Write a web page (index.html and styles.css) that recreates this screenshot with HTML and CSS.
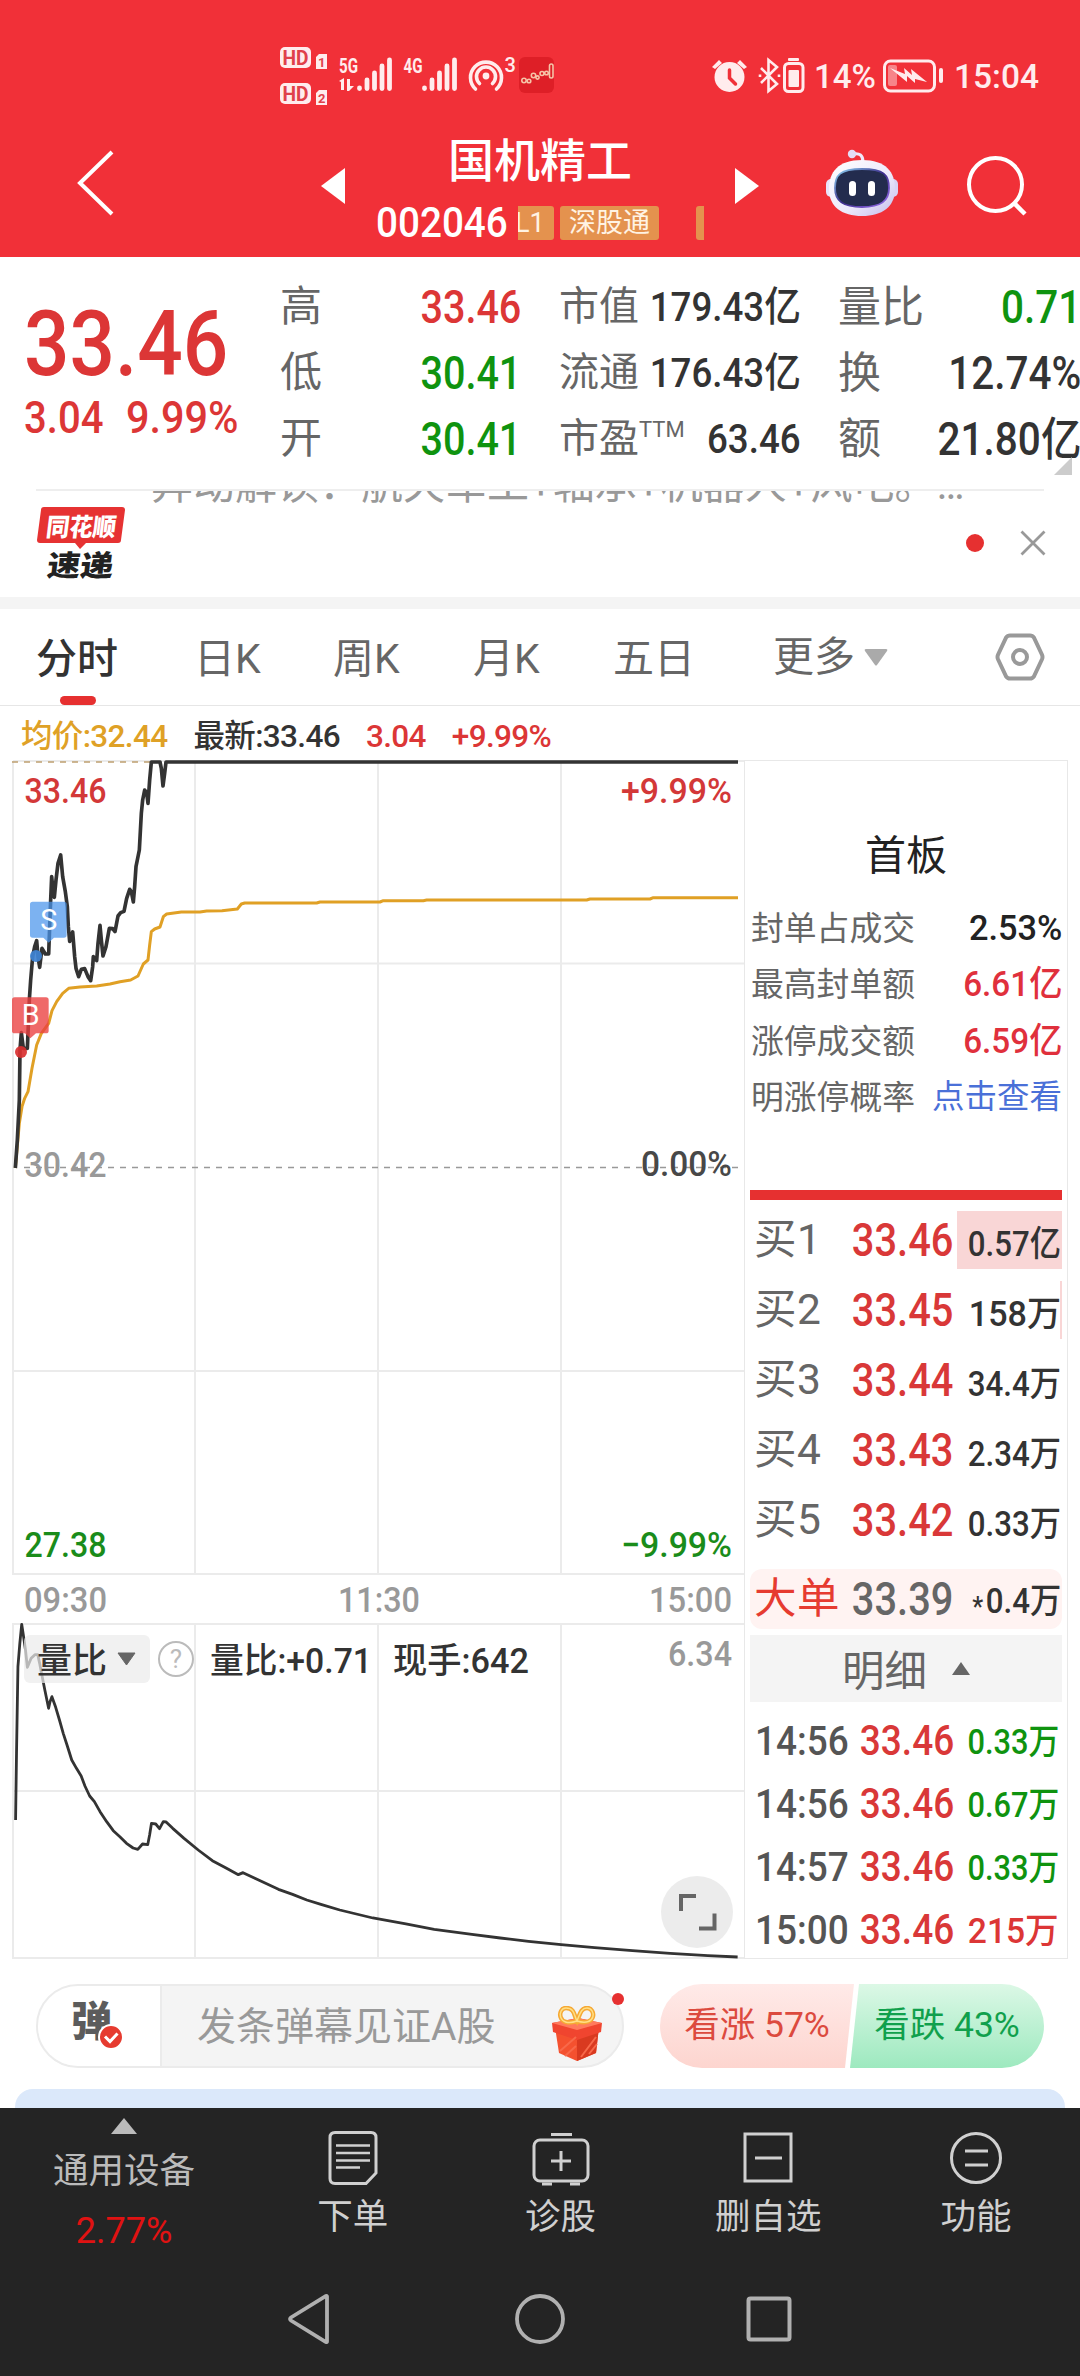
FILE: index.html
```html
<!DOCTYPE html>
<html lang="zh-CN">
<head>
<meta charset="utf-8">
<title>国机精工 002046</title>
<link rel="stylesheet" href="styles.css">
</head>
<body>
<header class="top">
  <div class="status">
    <svg class="status-left" width="290" height="70" viewBox="270 40 290 70">
      <g fill="#ffeced">
        <rect x="280" y="47" width="31" height="21" rx="5"/><rect x="280" y="83" width="31" height="21" rx="5"/>
        <path d="M316 57l3-3h8v15h-11zM316 93l3-3h8v15h-11z"/>
      </g>
      <g class="hd">
        <text x="282.500" y="64.500" textLength="26" lengthAdjust="spacingAndGlyphs">HD</text>
        <text x="282.500" y="100.500" textLength="26" lengthAdjust="spacingAndGlyphs">HD</text>
        <text class="sim" x="318" y="67">1</text><text class="sim" x="318" y="103">2</text>
      </g>
      <g class="net">
        <text x="339" y="73" textLength="19" lengthAdjust="spacingAndGlyphs">5G</text>
        <text x="403.500" y="73" textLength="19" lengthAdjust="spacingAndGlyphs">4G</text>
        <text class="count" x="504.500" y="72">3</text>
      </g>
      <g stroke="#ffeced" stroke-width="4.800" stroke-linecap="round" fill="none">
        <path d="M359.500 88v.5M367 80v8.500M374.500 73v15.500M382 66v22.500M389.500 60v28.500"/>
        <path d="M424.500 88v.5M432 80v8.500M439.500 73v15.500M447 66v22.500M454.500 60v28.500"/>
        <g stroke-width="3.600"><path d="M475.500 89a15.500 15.500 0 1 1 21 0M479.500 83.500a9.500 9.500 0 1 1 13 0"/></g>
      </g>
      <circle cx="486" cy="76" r="3.400" fill="#ffeced"/>
      <path d="M339 81l5-3v12h-3v-8zM347 79h3v7h4l-5 5h-2z" fill="#ffeced"/>
      <rect x="519" y="57" width="35" height="36" rx="6" fill="#de1f27"/>
      <g fill="none" stroke="#f6c4a8" stroke-width="1.600">
        <circle cx="524" cy="80.500" r="2.200"/><circle cx="529" cy="81" r="1.800"/><circle cx="533.500" cy="75.500" r="2.200"/><circle cx="537.500" cy="77.500" r="1.600"/><circle cx="542" cy="73.500" r="2"/><circle cx="546.500" cy="73" r="1.800"/>
        <rect x="549.500" y="64" width="3.500" height="14" rx="1.700"/>
      </g>
    </svg>
    <svg class="status-right" width="340" height="70" viewBox="705 40 340 70">
      <g fill="#ffeced">
        <circle cx="729.500" cy="77" r="15"/><path d="M712 67l7-7 3 3-7 6zM747 67l-7-7-3 3 7 6z"/>
        <rect x="788" y="58" width="11" height="3" rx="1"/><rect x="788.500" y="70" width="10.500" height="17" rx="1"/>
        <rect x="939" y="68" width="4" height="15" rx="2"/>
        <rect x="888" y="65" width="9" height="21" rx="2" opacity=".45"/>
        <path d="M890 68l15 6-1-6 8 7-1-6 16 13-12-3v4l-8-7v6z"/>
      </g>
      <path d="M729.500 70v8l6 6" fill="none" stroke="#f03038" stroke-width="3.500" stroke-linecap="round"/>
      <g fill="none" stroke="#ffeced">
        <path stroke-width="2.600" d="M761 68l16 16-8.500 7V60l8.500 7-16 16M760 74.500v2.500M779 74.500v2.500"/>
        <rect stroke-width="3" x="784.500" y="63.500" width="18.500" height="28" rx="4"/>
        <rect stroke-width="3" x="884.500" y="61" width="50" height="30" rx="6"/>
      </g>
      <g class="clock">
        <text x="814" y="88" textLength="62" lengthAdjust="spacingAndGlyphs">14%</text>
        <text x="954" y="88" textLength="85" lengthAdjust="spacingAndGlyphs">15:04</text>
      </g>
    </svg>
  </div>
  <div class="titlebar">
    <svg class="back" width="40" height="68" viewBox="0 0 40 68"><path d="M37 3L5 34l32 31" fill="none" stroke="#fff" stroke-width="4"/></svg>
    <svg class="prev" width="24" height="36" viewBox="0 0 24 36"><path d="M24 0v36L0 18z" fill="#fff"/></svg>
    <div class="names">
      <h1>国机精工</h1>
      <div class="code-row">
        <span class="code">002046</span>
        <div class="tags"><span class="tag cut">L1</span><span class="tag">深股通</span><span class="tag stub"></span></div>
      </div>
    </div>
    <svg class="next" width="24" height="36" viewBox="0 0 24 36"><path d="M0 0v36l24-18z" fill="#fff"/></svg>
    <svg class="robot" width="76" height="72" viewBox="823 147 76 72">
      <defs>
        <linearGradient id="shell" x1="0" y1="0" x2="1" y2="1"><stop offset="0" stop-color="#fff"/><stop offset=".6" stop-color="#ece8fb"/><stop offset="1" stop-color="#c3bbec"/></linearGradient>
        <linearGradient id="rim" x1="0" y1="0" x2="1" y2="1"><stop offset="0" stop-color="#8fd8f5"/><stop offset=".5" stop-color="#3c2c8c"/><stop offset="1" stop-color="#9a6ff0"/></linearGradient>
      </defs>
      <path d="M852 154q10-2 10 8" fill="none" stroke="#efe8fa" stroke-width="3"/>
      <circle cx="851" cy="154" r="4.200" fill="#e4dcf5"/>
      <rect x="825" y="179" width="10" height="18" rx="5" fill="#e9e3fa"/><rect x="887" y="179" width="10" height="18" rx="5" fill="#d9d2f5"/>
      <path d="M861 160c24 0 33 12 33 29 0 18-13 27-33 27s-33-9-33-27c0-17 9-29 33-29z" fill="url(#shell)"/>
      <path d="M861 169c22 0 27 6 27 19s-8 19-27 19-27-6-27-19 5-19 27-19z" fill="#232c4e" stroke="url(#rim)" stroke-width="1.800"/>
      <rect x="848" y="181" width="7" height="15" rx="3.500" fill="#fff"/><rect x="867" y="181" width="7" height="15" rx="3.500" fill="#fff"/>
    </svg>
    <svg class="search" width="62" height="62" viewBox="964 154 62 62"><circle cx="994.500" cy="184.500" r="26.500" fill="none" stroke="#fff" stroke-width="4"/><path d="M1013 203l11 11" stroke="#fff" stroke-width="4.500"/></svg>
  </div>
</header>

<section class="quote">
  <div class="last red">
    <div class="price"><span class="sl">33.46</span></div>
    <div class="change"><span class="sl">3.04</span><span class="sl">9.99%</span></div>
  </div>
  <dl class="c1">
    <div><dt>高</dt><dd class="red"><span class="sr">33.46</span></dd></div>
    <div><dt>低</dt><dd class="green"><span class="sr">30.41</span></dd></div>
    <div><dt>开</dt><dd class="green"><span class="sr">30.41</span></dd></div>
  </dl>
  <dl class="c2">
    <div><dt>市值</dt><dd><span class="sr">179.43亿</span></dd></div>
    <div><dt>流通</dt><dd><span class="sr">176.43亿</span></dd></div>
    <div><dt>市盈<sup>TTM</sup></dt><dd><span class="sr">63.46</span></dd></div>
  </dl>
  <dl class="c3">
    <div><dt>量比</dt><dd class="green"><span class="sr">0.71</span></dd></div>
    <div><dt>换</dt><dd><span class="sr">12.74%</span></dd></div>
    <div><dt>额</dt><dd><span class="sr">21.80亿</span></dd></div>
  </dl>
  <i class="corner"></i>
</section>

<section class="express">
  <svg class="logo" width="92" height="78" viewBox="35 504 92 78">
    <path d="M44 507h78q3 0 3 3l-4 30q0 3-3 3H86l-6 6-5-6H40q-3 0-3-3l4-30q0-3 3-3z" fill="#e63232"/>
    <g transform="skewX(-7)">
      <text class="logo-a" x="111" y="536" textLength="70" lengthAdjust="spacingAndGlyphs">同花顺</text>
      <text class="logo-b" x="117" y="576" textLength="66" lengthAdjust="spacingAndGlyphs">速递</text>
    </g>
  </svg>
  <div class="ticker"><p>异动解读：航天军工+轴承+机器人+风电。…</p></div>
  <i class="dot"></i>
  <svg class="close" width="26" height="26" viewBox="0 0 26 26"><path d="M1.500 1.500l23 23M24.500 1.500l-23 23" stroke="#999" stroke-width="2.800"/></svg>
</section>

<nav class="tabs">
  <a class="on">分时</a><a>日K</a><a>周K</a><a>月K</a><a>五日</a><a class="more">更多<svg width="24" height="19" viewBox="0 0 24 19"><path d="M2 1h20q2 0 1 2L13 17q-1 1-2 0L1 3Q0 1 2 1z" fill="#aaa"/></svg></a>
  <svg class="gear" width="50" height="48" viewBox="0 0 50 48"><path d="M15 2.500h20q2.500 0 4 2.200l8 17q1 2.300 0 4.600l-8 17q-1.500 2.200-4 2.200H15q-2.500 0-4-2.200l-8-17q-1-2.300 0-4.600l8-17q1.500-2.200 4-2.200z" fill="none" stroke="#999" stroke-width="4"/><circle cx="25" cy="24" r="7" fill="none" stroke="#999" stroke-width="4"/></svg>
</nav>

<main class="market">
  <section class="chart-col">
    <div class="legend"><span class="avg">均价:32.44</span><span>最新:33.46</span><span class="red">3.04</span><span class="red">+9.99%</span></div>
    <svg class="chart" width="744" height="1202" viewBox="0 758 744 1202">
      <g class="grid">
        <path d="M13 761v813M195 761v813M378 761v813M561 761v813M13 963.500h731M13 1371h731M12 1574h732M13 761h731"/>
        <path d="M13 1624v334M195 1624v334M378 1624v334M561 1624v334M12 1624h732M13 1791h731M12 1958h732"/>
      </g>
      <path class="limit" d="M12 762h140"/>
      <path class="base" d="M24 1167.500h714"/>
      <g class="labels">
        <text class="t-red" x="24.500" y="803" textLength="82" lengthAdjust="spacingAndGlyphs">33.46</text>
        <text class="t-red" x="621" y="803" textLength="111" lengthAdjust="spacingAndGlyphs">+9.99%</text>
        <text class="t-gray" x="24.500" y="1177" textLength="82" lengthAdjust="spacingAndGlyphs">30.42</text>
        <text class="t-dark" x="641" y="1176" textLength="91" lengthAdjust="spacingAndGlyphs">0.00%</text>
        <text class="t-green" x="24.500" y="1557" textLength="82" lengthAdjust="spacingAndGlyphs">27.38</text>
        <text class="t-green" x="621" y="1557" textLength="111" lengthAdjust="spacingAndGlyphs">−9.99%</text>
        <text class="t-gray" x="24" y="1612" textLength="83" lengthAdjust="spacingAndGlyphs">09:30</text>
        <text class="t-gray" x="338" y="1612" textLength="82" lengthAdjust="spacingAndGlyphs">11:30</text>
        <text class="t-gray" x="649" y="1612" textLength="83" lengthAdjust="spacingAndGlyphs">15:00</text>
        <text class="t-gray" x="668" y="1666" textLength="64" lengthAdjust="spacingAndGlyphs">6.34</text>
      </g>
      <g transform="translate(0 740) scale(.33333)">
        <path class="avg-line" d="M46 1284L58 1150 66 1100 74 1075 84 1055 96 985 110 915 124 880 146 850 156 812 170 785 188 760 206 745 240 741 290 738 330 732 360 725 392 720 414 708 430 672 444 660 449 615 454 575 464 567 480 561 490 530 500 522 544 516H600L620 513 666 512 712 507 724 492 734 489H950L960 486H1140L1150 482H1270L1280 480H1760L1770 477H1950L1960 473H2214"/>
        <path class="price-line" d="M46 1284L52 1200 58 1080 60 930 64 878 70 925H82L84 880 88 780 92 720 98 650 104 620 110 602 114 650 119 682 126 625 136 642H146L149 560 152 480 155 410 158 440 163 472 168 420 174 370 182 345 188 410 196 455 202 500 205 560 209 604 218 576 224 650 228 685 236 710 244 688 254 686 264 710 272 722 278 680 280 650 290 662 294 610 300 556 304 600 309 648 318 620 328 565 338 566 345 575 354 528 362 518 372 514 380 475 389 448 394 455 400 486 404 440 408 380 418 330 424 220 428 180 434 150 440 158 444 190 449 120 454 66H480L484 85 489 138 494 100 498 66H2214"/>
        <path d="M98 485h94q8 0 8 8v92q0 8-8 8h-30l-16 15-16-15H98q-8 0-8-8v-92q0-8 8-8z" fill="#4a94ec" opacity=".72"/>
        <circle cx="108" cy="648" r="18" fill="#3f83d4" opacity=".92"/>
        <path d="M44 772h94q8 0 8 8v92q0 8-8 8h-30l-17 15-16-15H44q-8 0-8-8v-92q0-8 8-8z" fill="#ea3f3f" opacity=".78"/>
        <circle cx="63" cy="936" r="18" fill="#d93030" opacity=".92"/>
        <text class="mark" x="146" y="569">S</text><text class="mark" x="92" y="856">B</text>
      </g>
      <path class="vol-line" transform="translate(0 1500) scale(.47193 .33333)" d="M33 960L35 760 38 500 42 430 46 373 50 410 54 450 58 502 66 475 74 464H80L84 490 88 520 95 570 103 625 106 605 110 590 118 622 126 660 134 700 142 735 152 780 162 805 172 828 180 858 190 888 200 905 212 935 226 965 240 992 254 1010 268 1030 282 1044 292 1048 302 1032 313 1034 317 1005 321 970 330 972 338 986 346 965 352 966 366 985 390 1015 420 1050 450 1082 480 1105 505 1124 515 1118 540 1135 590 1168 620 1183 650 1200 680 1213 720 1230 790 1254 860 1272 920 1288 1000 1303 1060 1314 1120 1324 1189 1334 1260 1343 1340 1352 1420 1360 1500 1367 1563 1371"/>
      <rect x="24" y="1635" width="126" height="48" rx="6" fill="#ececec" opacity=".72"/>
      <path d="M118 1653h17l-8.500 12z" fill="#666" stroke="#666" stroke-linejoin="round"/>
      <circle cx="176" cy="1659" r="17" fill="none" stroke="#bbb" stroke-width="2"/>
      <text class="help" x="176" y="1668">?</text>
      <g class="labels ind">
        <text x="37" y="1673" textLength="70" lengthAdjust="spacingAndGlyphs">量比</text>
        <text x="210" y="1673" textLength="162" lengthAdjust="spacingAndGlyphs">量比:+0.71</text>
        <text x="393" y="1673" textLength="136" lengthAdjust="spacingAndGlyphs">现手:642</text>
      </g>
      <circle cx="697" cy="1912" r="36" fill="#ececec"/>
      <path d="M696 1896h-15v15M699 1928.500h15.500v-15" fill="none" stroke="#666" stroke-width="4"/>
    </svg>
  </section>

  <aside class="book">
    <div class="board">
      <h2>首板</h2>
      <p><span>封单占成交</span><b>2.53%</b></p>
      <p><span>最高封单额</span><b class="crimson">6.61亿</b></p>
      <p><span>涨停成交额</span><b class="crimson">6.59亿</b></p>
      <p><span>明涨停概率</span><a>点击查看</a></p>
    </div>
    <ul class="bids">
      <li><span>买1</span><b><i class="sr">33.46</i></b><em style="--w:105px"><i class="sr">0.57亿</i></em></li>
      <li><span>买2</span><b><i class="sr">33.45</i></b><em style="--w:2px"><i class="sr wide">158万</i></em></li>
      <li><span>买3</span><b><i class="sr">33.44</i></b><em><i class="sr">34.4万</i></em></li>
      <li><span>买4</span><b><i class="sr">33.43</i></b><em><i class="sr">2.34万</i></em></li>
      <li><span>买5</span><b><i class="sr">33.42</i></b><em><i class="sr">0.33万</i></em></li>
      <li class="big"><span>大单</span><b><i class="sr">33.39</i></b><em><i class="sr"><small>*</small>0.4万</i></em></li>
    </ul>
    <div class="detail">明细<svg width="18" height="13" viewBox="0 0 18 13"><path d="M9 0l9 13H0z" fill="#666"/></svg></div>
    <ul class="ticks">
      <li><span><i class="sl">14:56</i></span><b><i class="sr">33.46</i></b><em class="green"><i class="sr">0.33万</i></em></li>
      <li><span><i class="sl">14:56</i></span><b><i class="sr">33.46</i></b><em class="green"><i class="sr">0.67万</i></em></li>
      <li><span><i class="sl">14:57</i></span><b><i class="sr">33.46</i></b><em class="green"><i class="sr">0.33万</i></em></li>
      <li><span><i class="sl">15:00</i></span><b><i class="sr">33.46</i></b><em class="red"><i class="sr wide">215万</i></em></li>
    </ul>
  </aside>
</main>

<section class="social">
  <div class="danmu">
    <div class="dan"><span>弹</span><svg width="26" height="26" viewBox="0 0 26 26"><circle cx="13" cy="13" r="12" fill="#e63b30" stroke="#fff" stroke-width="2"/><path d="M7 12.500l5 5 7.500-8" fill="none" stroke="#fff" stroke-width="3"/></svg></div>
    <div class="say">发条弹幕见证A股</div>
    <svg class="gift" width="52" height="56" viewBox="0 0 52 56">
      <path d="M4 21l23 9 21-9-3 26-19 8-18-8z" fill="#f4512f"/><path d="M26 30l22-9-3 26-19 8z" fill="#d93a20"/>
      <path d="M1 17l26-5 24 5-1 9-24 8-24-8z" fill="#f0452f"/><path d="M1 17l26-5 24 5-25 7z" fill="#ff7a5c"/>
      <path d="M9 45l16-14M14 50l11-10M30 51l15-20M38 48l8-10" stroke="#f8694a" stroke-width="2"/>
      <path d="M26 15C6 22 6 2 15 2s8 8 11 13C29 8 30 2 36 2c9 0 10 19-10 13z" fill="none" stroke="#f6a934" stroke-width="4.500"/>
      <path d="M26 15C6 22 6 2 15 2s8 8 11 13C29 8 30 2 36 2c9 0 10 19-10 13z" fill="none" stroke="#ffdf85" stroke-width="1.500"/>
    </svg>
    <i class="badge"></i>
  </div>
  <div class="vote"><div class="up">看涨 57%</div><div class="down">看跌 43%</div></div>
</section>
<div class="peek"></div>

<footer>
  <nav class="actions">
    <a class="index"><svg width="26" height="16" viewBox="0 0 26 16"><path d="M13 0l13 16H0z" fill="#bbb"/></svg><span>通用设备</span><b>2.77%</b></a>
    <a><svg width="60" height="60" viewBox="0 0 60 60"><g fill="none" stroke="#d0d0d0" stroke-width="3"><path d="M12 5.500h36q5 0 5 5V46L43 56.500H12q-5 0-5-5v-41q0-5 5-5z"/><path d="M13 18.500h34M13 26h34M13 33.500h34M13 40.500h24" stroke-width="2.600"/></g></svg><span>下单</span></a>
    <a><svg width="60" height="60" viewBox="0 0 60 60"><g fill="none" stroke="#d0d0d0" stroke-width="3"><rect x="3" y="13" width="54" height="41" rx="6"/><path d="M20 7.500h21M30 24v20M20 34h20M11 57h10M39 57h10"/></g></svg><span>诊股</span></a>
    <a><svg width="60" height="60" viewBox="0 0 60 60"><g fill="none" stroke="#d0d0d0" stroke-width="3"><rect x="7" y="7" width="46" height="47"/><path d="M17 31h27"/></g></svg><span>删自选</span></a>
    <a><svg width="60" height="60" viewBox="0 0 60 60"><g fill="none" stroke="#d0d0d0" stroke-width="3"><circle cx="30" cy="31" r="24.500"/><path d="M19 24h23M19 38h23"/></g></svg><span>功能</span></a>
  </nav>
  <nav class="system">
    <svg width="46" height="52" viewBox="0 0 46 52"><path d="M41 3.500v45q0 1-1 .5L5 27.500q-2-1.500 0-3L40 3q1-.5 1 .5z" fill="none" stroke="#b0b0b0" stroke-width="3.800"/></svg>
    <svg width="52" height="52" viewBox="0 0 52 52"><circle cx="26" cy="26" r="23" fill="none" stroke="#b0b0b0" stroke-width="3.800"/></svg>
    <svg width="46" height="46" viewBox="0 0 46 46"><rect x="2.500" y="2.500" width="41" height="41" rx="2" fill="none" stroke="#b0b0b0" stroke-width="4"/></svg>
  </nav>
</footer>
</body>
</html>
```
FILE: styles.css
```css
* { box-sizing: border-box; margin: 0; padding: 0; }
body {
  width: 1080px;
  height: 2376px;
  overflow: hidden;
  background: #fff;
  color: #333;
  font-family: Roboto, "Noto Sans CJK SC", sans-serif;
  display: flex;
  flex-direction: column;
}
svg { display: block; flex: none; }
i, em { font-style: normal; }
ul { list-style: none; }
.red { color: #dc3636; }
.green { color: #0f930f; }
.crimson { color: #e0303c; }

/* Narrow numerals, squeezed toward the edge they align with */
.sl, .sr { display: inline-block; white-space: nowrap; transform: scaleX(.88); transform-origin: left; }
.sr { transform-origin: right; }

/* Header */
.top { height: 257px; background: #f13038; flex: none; }
.status { height: 110px; padding-top: 40px; display: flex; }
.status-left { margin-left: 270px; }
.status-right { margin-left: 145px; }
.hd { font-weight: 700; font-size: 20px; fill: #e0404a; }
.hd .sim { font-size: 13px; }
.net { font-weight: 700; font-size: 20.500px; fill: #ffeced; }
.net .count { font-size: 20px; font-weight: 500; }
.clock { font-size: 34px; font-weight: 500; fill: #ffeced; }
.titlebar { height: 147px; display: flex; align-items: flex-start; }
.back { margin: 39px 0 0 75px; }
.prev { margin: 58px 0 0 206px; }
.names { width: 390px; padding-top: 23px; }
.names h1 { font-size: 46px; line-height: 56px; font-weight: 500; color: #fff; text-align: center; }
.code-row { display: flex; align-items: center; margin: 15px 0 0 31px; height: 37px; }
.code { width: 142px; font-size: 42px; font-weight: 500; color: #fff; line-height: 36px; transform: scaleX(.92); transform-origin: left; white-space: nowrap; }
.tags { width: 186px; overflow: hidden; display: flex; gap: 6px; }
.tag { height: 34px; line-height: 34px; flex: none; width: 99px; border-radius: 3px; background: #e4924e; color: #fff3e3; font-size: 27px; text-align: center; }
.tag.cut { width: 36px; text-indent: -3px; border-radius: 0 3px 3px 0; text-align: left; overflow: hidden; }
.tag.stub { width: 20px; margin-left: 31px; }
.next { margin-top: 58px; }
.robot { margin: 37px 0 0 65px; }
.search { margin: 44px 0 0 65px; }

/* Quote */
.quote { height: 232px; flex: none; position: relative; display: grid; grid-template-columns: 256px 241px 279px 240px; padding: 17px 0 0 24px; }
.price { font-size: 91px; font-weight: 500; line-height: 92px; margin-top: 24px; }
.change { display: flex; font-size: 44px; line-height: 46px; font-weight: 500; margin-top: 5px; }
.change .sl { width: 102px; transform: scaleX(.91); }
.change .sl + .sl { transform: scaleX(.94); }
.quote dl > div { display: flex; height: 66px; align-items: center; justify-content: space-between; line-height: 62px; }
.quote dl { font-size: 46px; }
.quote dt { color: #666; font-size: 42px; white-space: nowrap; }
.quote dd { font-weight: 500; }
.c1 .sr { transform: scaleX(.86); }
.quote .c2 { padding-left: 38px; font-size: 41px; }
.quote .c2 dt { font-size: 40px; }
.c2 .sr { margin: 0 -1px 0 -16px; transform: scaleX(.895); }
.c2 sup { font-size: 22px; line-height: 0; vertical-align: 15px; }
.c3 { padding-left: 38px; width: 281px; }
.quote .c3 dt { font-size: 43px; }
.c3 .sr { margin-left: -16px; }
.corner { position: absolute; right: 8px; top: 200px; width: 18px; height: 18px; background: #ccc; clip-path: polygon(100% 0, 100% 100%, 0 100%); }

/* Express news */
.express { height: 108px; flex: none; margin: 0 36px; border-top: 2px solid #eee; display: flex; align-items: flex-start; }
.logo { margin-top: 13px; margin-left: -1px; }
.logo-a { fill: #fff; font-size: 25px; font-weight: 900; }
.logo-b { fill: #222; font-size: 29px; font-weight: 900; }
.ticker { height: 100px; width: 814px; flex: none; margin-left: 24px; overflow: hidden; }
.ticker p { margin-top: -34px; font-size: 42px; line-height: 56px; color: #999; white-space: nowrap; }
.dot { width: 18px; height: 18px; flex: none; border-radius: 50%; background: #e63030; margin: 43px 0 0 1px; }
.close { margin: 39px 0 0 36px; }

/* Tabs */
.tabs { height: 109px; flex: none; border-top: 12px solid #f4f4f4; border-bottom: 1px solid #e6e6e6; display: flex; font-size: 41px; line-height: 100px; color: #666; }
.tabs a { position: relative; white-space: nowrap; width: 140px; }
.tabs .on { margin-left: 36px; color: #333; font-weight: 500; width: 158px; }
.tabs .on::after { content: ""; position: absolute; left: 24px; bottom: 0; width: 36px; height: 9px; border-radius: 5px; background: #e63030; }
.tabs a:nth-child(2) { width: 139px; }
.tabs a:nth-child(5) { width: 160px; }
.tabs .more { display: flex; align-items: center; gap: 9px; width: 222px; }
.gear { margin: 24px 0 0; }

/* Chart column */
.market { display: flex; height: 1253px; flex: none; }
.chart-col { width: 744px; }
.legend { height: 52px; padding: 5px 0 0 21px; display: flex; gap: 26px; font-size: 31.500px; line-height: 52px; font-weight: 500; letter-spacing: -.65px; white-space: nowrap; }
.legend .avg { color: #dfa126; }
.grid path { fill: none; stroke: #ebebeb; stroke-width: 2; }
.limit { stroke: #bfa070; stroke-width: 1.600; stroke-dasharray: 6 6; }
.base { stroke: #999; stroke-width: 1.600; stroke-dasharray: 6 6; }
.labels { font-size: 35.500px; font-weight: 500; }
.ind { fill: #333; font-size: 35px; }
.t-red { fill: #d33838; }
.t-green { fill: #1a8c1a; }
.t-gray { fill: #999; }
.t-dark { fill: #484848; }
.avg-line { fill: none; stroke: #e0a025; stroke-width: 9; stroke-linejoin: round; }
.price-line { fill: none; stroke: #333; stroke-width: 11; stroke-linejoin: round; }
.vol-line { fill: none; stroke: #333; stroke-width: 2.800; stroke-linejoin: round; vector-effect: non-scaling-stroke; }
.mark { fill: #fff; font-size: 86px; text-anchor: middle; }
.help { fill: #bbb; font-size: 26px; text-anchor: middle; }

/* Order book */
.book { width: 324px; margin-top: 54px; height: 1199px; border: 1px solid #e8e8e8; padding: 0 5px; }
.board { height: 439px; padding-top: 65px; border-bottom: 10px solid #e63030; }
.board h2 { font-size: 41px; line-height: 60px; font-weight: 400; text-align: center; color: #222; margin-bottom: 15px; }
.board p { display: flex; justify-content: space-between; height: 56.300px; line-height: 55px; font-size: 32.800px; color: #666; white-space: nowrap; }
.board span { padding: 1px 0 0 1px; }
.board b { font-size: 35px; font-weight: 500; color: #222; transform: scaleX(.98); transform-origin: right; }
.board b.crimson { color: #e0303c; transform: scaleX(.95); }
.board a { color: #4a70d8; font-size: 32.500px; }
.bids { padding-top: 5px; }
.bids li { height: 70px; padding: 0 1px 0 4px; display: flex; align-items: center; position: relative; line-height: 60px; white-space: nowrap; }
.bids span { width: 82px; font-size: 42.500px; color: #666; letter-spacing: .5px; }
.bids b, .ticks b { width: 112px; font-size: 46px; font-weight: 500; color: #d93838; text-align: right; }
.bids b .sr { transform: scaleX(.865); }
.bids em { flex: 1; text-align: right; font-size: 35.500px; font-weight: 500; padding-top: 7px; color: #333; }
.bids em::before { content: ""; position: absolute; z-index: -1; right: 0; top: 6px; height: 58px; width: var(--w, 0); background: #f9d6d6; }
.bids small { font-size: 28px; margin-right: 3px; position: relative; top: 3px; }
.bids .big { height: 60px; margin-top: 14px; background: #fff3f2; border-radius: 12px; }
.bids .big span { color: #e63b30; }
.bids .big b { color: #666; }
.detail { margin-top: 6px; height: 67px; background: #f4f4f4; display: flex; align-items: center; justify-content: center; gap: 25px; font-size: 42.500px; color: #666; line-height: 67px; padding-top: 5px; }
.detail svg { margin-top: -5px; }
.ticks { padding-top: 7px; }
.ticks li { height: 63px; display: flex; align-items: center; padding: 0 3px 0 5px; line-height: 60px; white-space: nowrap; }
.ticks span { width: 91px; font-size: 41px; font-weight: 500; color: #555; }
.ticks .sl { transform: scaleX(.9); }
.ticks b { font-size: 42px; width: 108px; }
.ticks em { flex: 1; text-align: right; font-size: 35px; font-weight: 500; padding-top: 5px; }
.book .wide { transform: scaleX(.96); }

/* Social row */
.social { display: flex; height: 84px; margin: 25px 36px 21px; justify-content: space-between; flex: none; }
.danmu { width: 588px; position: relative; border: 2px solid #ebebeb; border-radius: 42px; display: flex; background: #f4f4f4; }
.dan { width: 124px; background: #fff; border-right: 2px solid #ebebeb; border-radius: 40px 0 0 40px; position: relative; }
.dan span { display: block; font-weight: 900; font-size: 41px; line-height: 72px; padding-left: 33px; color: #5c5c5c; }
.dan svg { position: absolute; left: 60px; top: 38px; }
.say { font-size: 39px; line-height: 82px; color: #999; padding-left: 35px; width: 389px; white-space: nowrap; }
.gift { margin-top: 20px; }
.badge { position: absolute; right: -2px; top: 7px; width: 12px; height: 12px; border-radius: 50%; background: #e63030; }
.vote { width: 384px; display: flex; border-radius: 42px; overflow: hidden; font-size: 35.500px; line-height: 82px; text-align: center; }
.up { width: 194px; background: linear-gradient(#ffeae8, #fdd5cf); color: #dc4a3e; clip-path: polygon(0 0, 100% 0, 185px 100%, 0 100%); }
.down { width: 194px; margin-left: -4px; background: linear-gradient(#dcf8e6, #9de9bf); color: #10a04c; clip-path: polygon(9px 0, 100% 0, 100% 100%, 0 100%); }
.peek { height: 19px; flex: none; margin: 0 15px; background: #dbe8fa; border-radius: 18px 18px 0 0; }

/* Footer */
footer { height: 269px; flex: none; background: #242424; }
.actions { height: 175px; display: flex; color: #d0d0d0; font-size: 35.500px; line-height: 50px; }
.actions a { width: 207.700px; display: flex; flex-direction: column; align-items: center; padding-top: 19px; gap: 5px; }
.actions .index { width: 249px; padding-top: 10px; padding-right: 1px; color: #bbb; gap: 12px; }
.actions .index b { font-weight: 400; font-size: 36px; color: #e01212; margin-top: -2px; }
.system { display: flex; align-items: center; padding-left: 286px; height: 72px; }
.system svg:nth-child(2) { margin-left: 182px; }
.system svg:nth-child(3) { margin-left: 180px; }
```
